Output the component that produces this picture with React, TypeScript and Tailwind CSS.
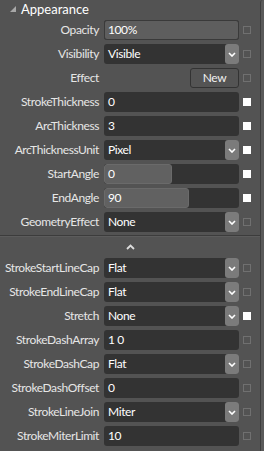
import React from "react";

type Row =
  | { label: string; kind: "slider"; value: string; pct: number; check: boolean }
  | { label: string; kind: "select"; value: string; check: boolean }
  | { label: string; kind: "text"; value: string; check: boolean }
  | { label: string; kind: "button"; value: string; check: boolean };

const top: Row[] = [
  { label: "Opacity", kind: "slider", value: "100%", pct: 100, check: false },
  { label: "Visibility", kind: "select", value: "Visible", check: false },
  { label: "Effect", kind: "button", value: "New", check: false },
  { label: "StrokeThickness", kind: "text", value: "0", check: true },
  { label: "ArcThickness", kind: "text", value: "3", check: true },
  { label: "ArcThicknessUnit", kind: "select", value: "Pixel", check: true },
  { label: "StartAngle", kind: "slider", value: "0", pct: 50, check: true },
  { label: "EndAngle", kind: "slider", value: "90", pct: 63, check: true },
  { label: "GeometryEffect", kind: "select", value: "None", check: false },
];

const bottom: Row[] = [
  { label: "StrokeStartLineCap", kind: "select", value: "Flat", check: false },
  { label: "StrokeEndLineCap", kind: "select", value: "Flat", check: false },
  { label: "Stretch", kind: "select", value: "None", check: true },
  { label: "StrokeDashArray", kind: "text", value: "1 0", check: false },
  { label: "StrokeDashCap", kind: "select", value: "Flat", check: false },
  { label: "StrokeDashOffset", kind: "text", value: "0", check: false },
  { label: "StrokeLineJoin", kind: "select", value: "Miter", check: false },
  { label: "StrokeMiterLimit", kind: "text", value: "10", check: false },
];

function Chevron() {
  return (
    <svg width="8" height="5" viewBox="0 0 8 5">
      <path d="M1 1 L4 4 L7 1" stroke="#ffffff" strokeWidth="1.6" fill="none" />
    </svg>
  );
}

function Field({ row }: { row: Row }) {
  if (row.kind === "button") {
    return (
      <div className="w-[135px] h-[20px] flex justify-end">
        <div className="w-[49px] h-[20px] rounded-[3px] border border-[#333333] bg-[#545454] flex items-center justify-center text-[#f0f0f0]">
          {row.value}
        </div>
      </div>
    );
  }
  if (row.kind === "slider") {
    const full = row.pct >= 100;
    return (
      <div className="relative w-[135px] h-[20px] rounded-[3px] bg-[#333333] overflow-hidden">
        <div
          className={
            full
              ? "absolute inset-0 rounded-[3px] border border-[#3a3a3a] bg-[#5e5e5e]"
              : "absolute left-0 top-0 bottom-0 rounded-[3px] border border-[#6a6a6a] bg-[#616161]"
          }
          style={{ width: `${row.pct}%` }}
        />
        <div className="relative h-full flex items-center pl-[4px] text-white">{row.value}</div>
      </div>
    );
  }
  if (row.kind === "select") {
    return (
      <div className="w-[135px] h-[20px] rounded-[3px] bg-[#333333] flex items-center justify-between">
        <span className="pl-[4px] text-white">{row.value}</span>
        <div className="w-[14px] h-[20px] rounded-[3px] bg-[#7b7b7b] flex items-center justify-center">
          <Chevron />
        </div>
      </div>
    );
  }
  return (
    <div className="w-[135px] h-[20px] rounded-[3px] bg-[#333333] flex items-center pl-[4px] text-white">
      {row.value}
    </div>
  );
}

function RowView({ row }: { row: Row }) {
  return (
    <div className="flex items-center h-[20px]">
      <div className="w-[104px] pr-[5px] text-right text-[#e6e6e6] whitespace-nowrap">{row.label}</div>
      <Field row={row} />
      <div className="ml-[4px]">
        {row.check ? (
          <div className="w-[8px] h-[8px] bg-white" />
        ) : (
          <div className="w-[8px] h-[8px] border border-[#707070]" />
        )}
      </div>
    </div>
  );
}

export default function App() {
  return (
    <div
      className="w-[264px] h-[451px] bg-[#535353] flex overflow-hidden text-[12px] leading-none tracking-[-0.4px]"
      style={{ fontFamily: 'Lato, "Noto Sans", sans-serif' }}
    >
      <div className="w-[260px] flex flex-col">
        <div className="h-[18px] flex items-center pl-[10px] gap-[5px]">
          <svg width="6" height="6" viewBox="0 0 6 6">
            <path d="M6 0 L6 6 L0 6 Z" fill="#a8a8a8" />
          </svg>
          <span className="text-white text-[13px] tracking-normal">Appearance</span>
        </div>
        <div className="pt-[2px] flex flex-col gap-[4px]">
          {top.map((r) => (
            <RowView key={r.label} row={r} />
          ))}
        </div>
        <div className="mt-[3px] h-[1px] bg-[#3c3c3c]" />
        <div className="h-[1px] bg-[#5c5c5c]" />
        <div className="h-[21px] flex items-center justify-center pb-[2px]">
          <svg width="9" height="6" viewBox="0 0 9 6">
            <path d="M1 5 L4.5 1.5 L8 5" stroke="#dddddd" strokeWidth="1.8" fill="none" />
          </svg>
        </div>
        <div className="flex flex-col gap-[4px]">
          {bottom.map((r) => (
            <RowView key={r.label} row={r} />
          ))}
        </div>
      </div>
      <div className="w-[4px] h-full border-l border-[#3e3e3e] bg-[#5a5a5a] rounded-tl-[3px]" />
    </div>
  );
}
